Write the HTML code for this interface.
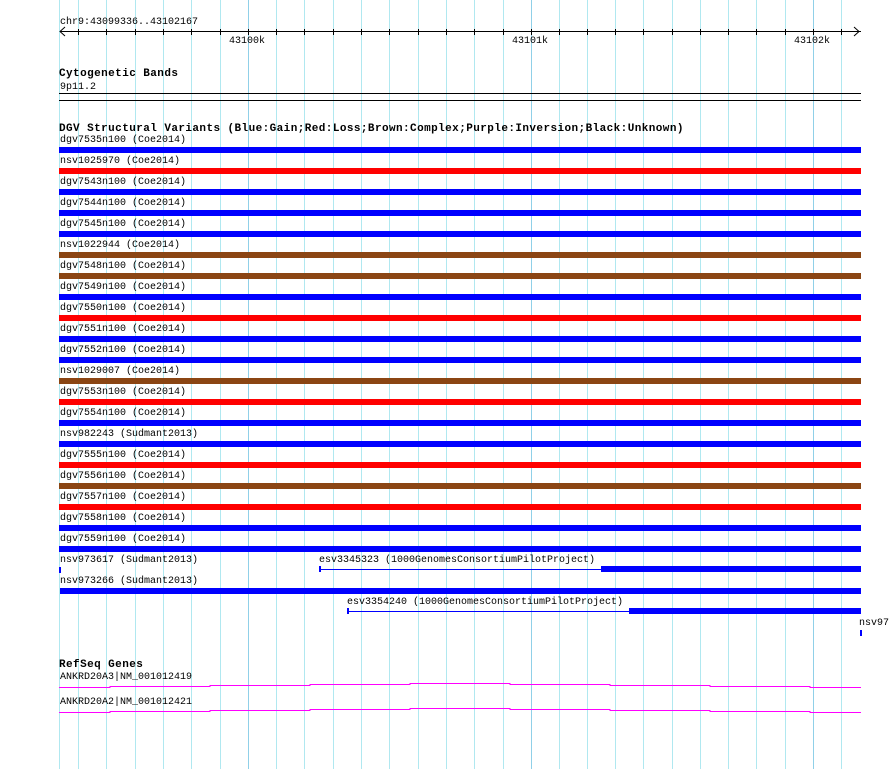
<!DOCTYPE html>
<html><head><meta charset="utf-8"><style>
body{margin:0;width:890px;height:769px;background:#fff;position:relative;overflow:hidden;font-family:"Liberation Mono",monospace;font-size:10px;color:#000}
.g{position:absolute;top:0;height:769px;width:1px;background:#b0e8f0}
.G{background:#90d0e8}
.t{position:absolute;line-height:12px;white-space:pre}
.b{position:absolute;font-weight:bold;font-size:11px;letter-spacing:0.42px;line-height:12px;white-space:pre}
.r{position:absolute;height:6px}
.h{position:absolute;height:1px}
.tk{position:absolute;top:29px;width:1px;height:6px;background:#000}
</style></head><body>
<div class="g" style="left:59px"></div>
<div class="g" style="left:78px"></div><div class="g" style="left:106px"></div><div class="g" style="left:135px"></div><div class="g" style="left:163px"></div><div class="g" style="left:191px"></div><div class="g" style="left:220px"></div><div class="g G" style="left:248px"></div><div class="g" style="left:276px"></div><div class="g" style="left:304px"></div><div class="g" style="left:333px"></div><div class="g" style="left:361px"></div><div class="g" style="left:389px"></div><div class="g" style="left:418px"></div><div class="g" style="left:446px"></div><div class="g" style="left:474px"></div><div class="g" style="left:503px"></div><div class="g G" style="left:531px"></div><div class="g" style="left:559px"></div><div class="g" style="left:587px"></div><div class="g" style="left:615px"></div><div class="g" style="left:643px"></div><div class="g" style="left:672px"></div><div class="g" style="left:700px"></div><div class="g" style="left:728px"></div><div class="g" style="left:756px"></div><div class="g" style="left:785px"></div><div class="g G" style="left:813px"></div><div class="g" style="left:841px"></div>

<div class="t" style="left:60px;top:17px">chr9:43099336..43102167</div>
<div class="h" style="left:60px;top:31px;width:801px;background:#000"></div>
<svg style="position:absolute;left:58px;top:26px" width="808" height="12"><path d="M7 1 L2 5.5 L7 10 M796 1 L801 5.5 L796 10" stroke="#000" fill="none"/></svg>
<div class="tk" style="left:78px"></div><div class="tk" style="left:106px"></div><div class="tk" style="left:135px"></div><div class="tk" style="left:163px"></div><div class="tk" style="left:191px"></div><div class="tk" style="left:220px"></div><div class="tk" style="left:248px"></div><div class="tk" style="left:276px"></div><div class="tk" style="left:304px"></div><div class="tk" style="left:333px"></div><div class="tk" style="left:361px"></div><div class="tk" style="left:389px"></div><div class="tk" style="left:418px"></div><div class="tk" style="left:446px"></div><div class="tk" style="left:474px"></div><div class="tk" style="left:503px"></div><div class="tk" style="left:531px"></div><div class="tk" style="left:559px"></div><div class="tk" style="left:587px"></div><div class="tk" style="left:615px"></div><div class="tk" style="left:643px"></div><div class="tk" style="left:672px"></div><div class="tk" style="left:700px"></div><div class="tk" style="left:728px"></div><div class="tk" style="left:756px"></div><div class="tk" style="left:785px"></div><div class="tk" style="left:813px"></div><div class="tk" style="left:841px"></div>
<div class="t" style="left:229px;top:36px">43100k</div>
<div class="t" style="left:512px;top:36px">43101k</div>
<div class="t" style="left:794px;top:36px">43102k</div>

<div class="b" style="left:59px;top:68px">Cytogenetic Bands</div>
<div class="t" style="left:60px;top:82px">9p11.2</div>
<div class="h" style="left:59px;top:93px;width:802px;background:#000"></div>
<div class="h" style="left:59px;top:100px;width:802px;background:#000"></div>

<div class="b" style="left:59px;top:123px">DGV Structural Variants (Blue:Gain;Red:Loss;Brown:Complex;Purple:Inversion;Black:Unknown)</div>

<div class="t" style="left:60px;top:135px">dgv7535n100 (Coe2014)</div><div class="r" style="left:59px;top:147px;width:802px;background:#00f"></div>
<div class="t" style="left:60px;top:156px">nsv1025970 (Coe2014)</div><div class="r" style="left:59px;top:168px;width:802px;background:#f00"></div>
<div class="t" style="left:60px;top:177px">dgv7543n100 (Coe2014)</div><div class="r" style="left:59px;top:189px;width:802px;background:#00f"></div>
<div class="t" style="left:60px;top:198px">dgv7544n100 (Coe2014)</div><div class="r" style="left:59px;top:210px;width:802px;background:#00f"></div>
<div class="t" style="left:60px;top:219px">dgv7545n100 (Coe2014)</div><div class="r" style="left:59px;top:231px;width:802px;background:#00f"></div>
<div class="t" style="left:60px;top:240px">nsv1022944 (Coe2014)</div><div class="r" style="left:59px;top:252px;width:802px;background:#8b4513"></div>
<div class="t" style="left:60px;top:261px">dgv7548n100 (Coe2014)</div><div class="r" style="left:59px;top:273px;width:802px;background:#8b4513"></div>
<div class="t" style="left:60px;top:282px">dgv7549n100 (Coe2014)</div><div class="r" style="left:59px;top:294px;width:802px;background:#00f"></div>
<div class="t" style="left:60px;top:303px">dgv7550n100 (Coe2014)</div><div class="r" style="left:59px;top:315px;width:802px;background:#f00"></div>
<div class="t" style="left:60px;top:324px">dgv7551n100 (Coe2014)</div><div class="r" style="left:59px;top:336px;width:802px;background:#00f"></div>
<div class="t" style="left:60px;top:345px">dgv7552n100 (Coe2014)</div><div class="r" style="left:59px;top:357px;width:802px;background:#00f"></div>
<div class="t" style="left:60px;top:366px">nsv1029007 (Coe2014)</div><div class="r" style="left:59px;top:378px;width:802px;background:#8b4513"></div>
<div class="t" style="left:60px;top:387px">dgv7553n100 (Coe2014)</div><div class="r" style="left:59px;top:399px;width:802px;background:#f00"></div>
<div class="t" style="left:60px;top:408px">dgv7554n100 (Coe2014)</div><div class="r" style="left:59px;top:420px;width:802px;background:#00f"></div>
<div class="t" style="left:60px;top:429px">nsv982243 (Sudmant2013)</div><div class="r" style="left:59px;top:441px;width:802px;background:#00f"></div>
<div class="t" style="left:60px;top:450px">dgv7555n100 (Coe2014)</div><div class="r" style="left:59px;top:462px;width:802px;background:#f00"></div>
<div class="t" style="left:60px;top:471px">dgv7556n100 (Coe2014)</div><div class="r" style="left:59px;top:483px;width:802px;background:#8b4513"></div>
<div class="t" style="left:60px;top:492px">dgv7557n100 (Coe2014)</div><div class="r" style="left:59px;top:504px;width:802px;background:#f00"></div>
<div class="t" style="left:60px;top:513px">dgv7558n100 (Coe2014)</div><div class="r" style="left:59px;top:525px;width:802px;background:#00f"></div>
<div class="t" style="left:60px;top:534px">dgv7559n100 (Coe2014)</div><div class="r" style="left:59px;top:546px;width:802px;background:#00f"></div>

<div class="t" style="left:60px;top:555px">nsv973617 (Sudmant2013)</div><div class="r" style="left:59px;top:567px;width:2px;background:#00f"></div>
<div class="t" style="left:319px;top:555px">esv3345323 (1000GenomesConsortiumPilotProject)</div>
<div class="r" style="left:319px;top:566px;width:2px;background:#00f"></div>
<div class="h" style="left:319px;top:569px;width:282px;background:#00f"></div>
<div class="r" style="left:601px;top:566px;width:260px;background:#00f"></div>
<div class="t" style="left:60px;top:576px">nsv973266 (Sudmant2013)</div><div class="r" style="left:60px;top:588px;width:801px;background:#00f"></div>
<div class="t" style="left:347px;top:597px">esv3354240 (1000GenomesConsortiumPilotProject)</div>
<div class="r" style="left:347px;top:608px;width:2px;background:#00f"></div>
<div class="h" style="left:347px;top:611px;width:282px;background:#00f"></div>
<div class="r" style="left:629px;top:608px;width:232px;background:#00f"></div>
<div class="t" style="left:859px;top:618px">nsv97</div>
<div class="r" style="left:860px;top:630px;width:2px;background:#00f"></div>

<div class="b" style="left:59px;top:659px">RefSeq Genes</div>
<div class="t" style="left:60px;top:672px">ANKRD20A3|NM_001012419</div>
<div class="t" style="left:60px;top:697px">ANKRD20A2|NM_001012421</div>
<svg style="position:absolute;left:0;top:0" width="890" height="769"><g fill="none" stroke="#f0f" stroke-width="1">
<path d="M59 687.5H110V686.5H210V685.5H310V684.5H410V683.5H510V684.5H610V685.5H710V686.5H810V687.5H861"/>
<path d="M59 712.5H110V711.5H210V710.5H310V709.5H410V708.5H510V709.5H610V710.5H710V711.5H810V712.5H861"/>
</g></svg>
</body></html>
